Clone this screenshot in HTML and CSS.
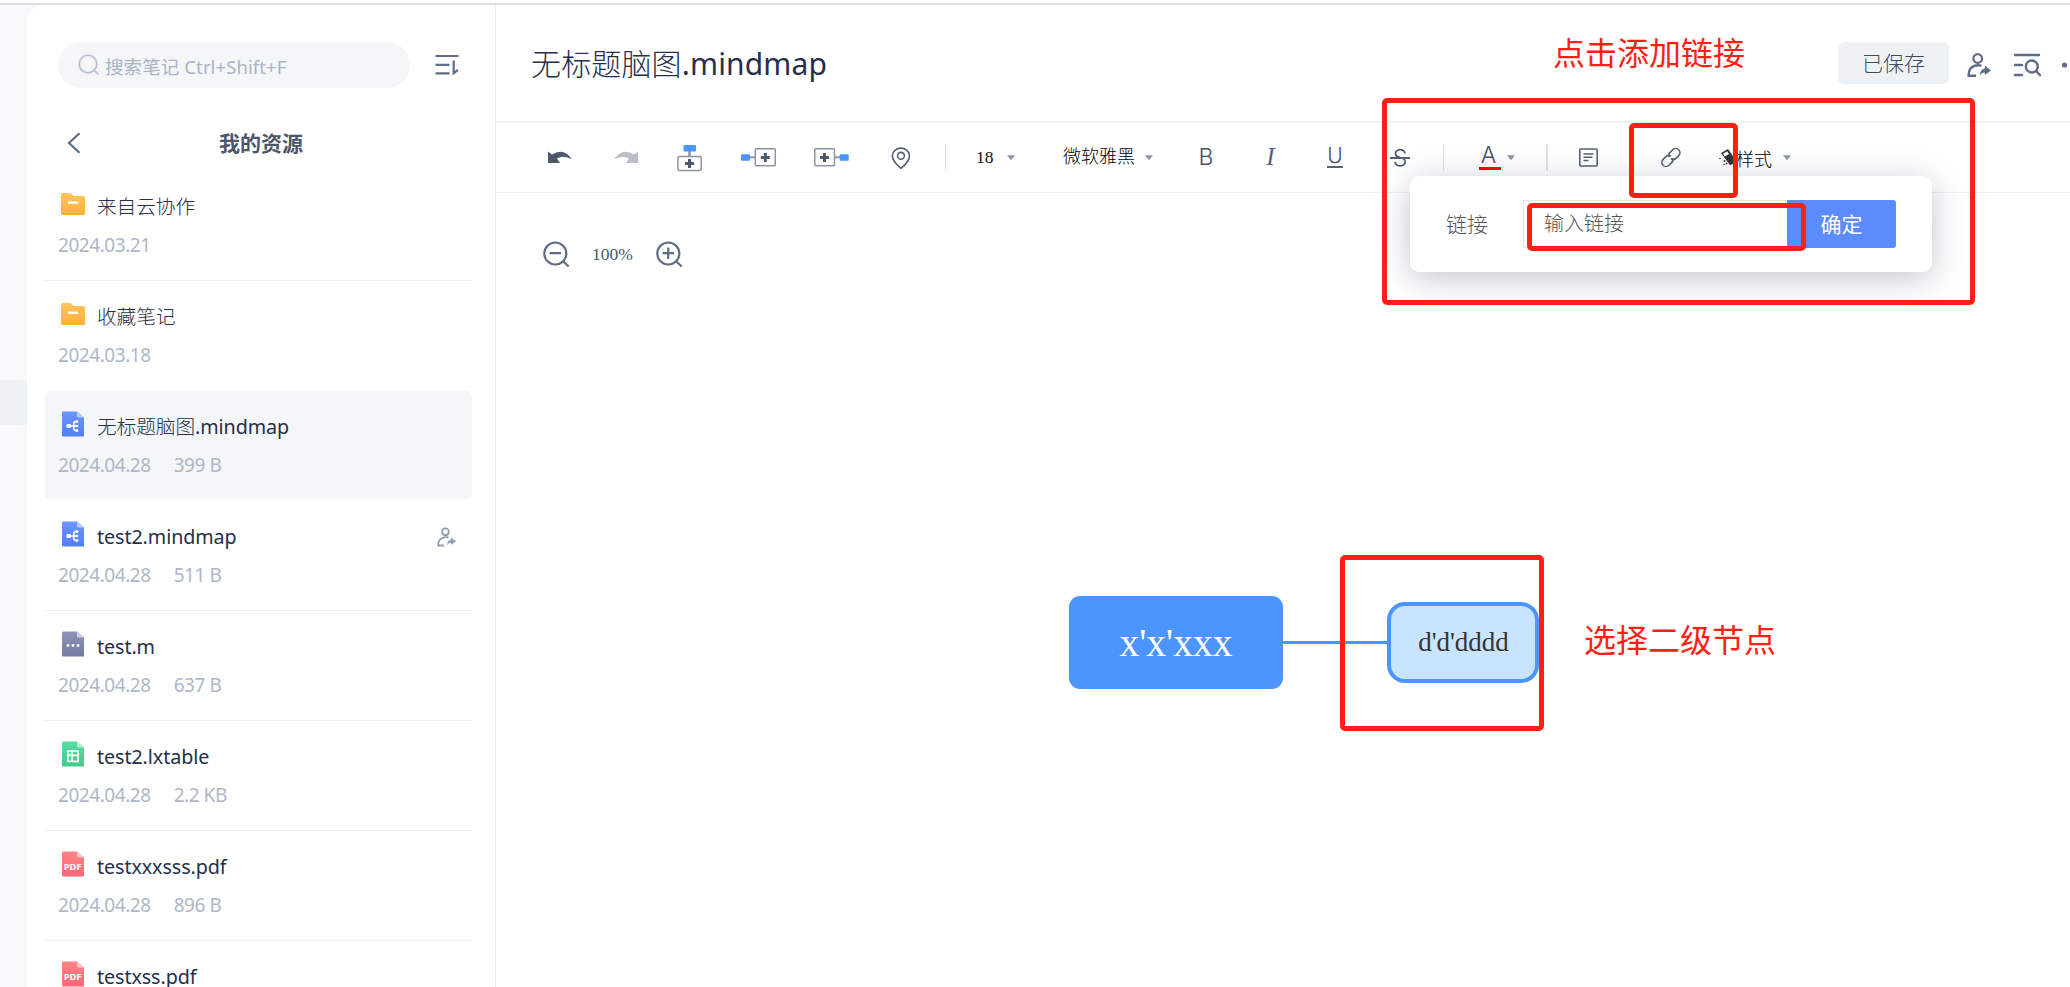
FILE: index.html
```html
<!DOCTYPE html>
<html lang="zh-CN">
<head>
<meta charset="utf-8">
<title>无标题脑图.mindmap</title>
<link rel="stylesheet" href="styles.css">
</head>
<body>
<svg class="defs" width="0" height="0">
  <defs>
    <linearGradient id="gFolder" x1="0" y1="0" x2="0" y2="1"><stop offset="0" stop-color="#ffc45c"/><stop offset="1" stop-color="#ffb03c"/></linearGradient>
    <linearGradient id="gBlue" x1="0" y1="0" x2="0" y2="1"><stop offset="0" stop-color="#6c96ff"/><stop offset="1" stop-color="#4f7ffc"/></linearGradient>
    <linearGradient id="gGrey" x1="0" y1="0" x2="0" y2="1"><stop offset="0" stop-color="#8f94b8"/><stop offset="1" stop-color="#747aa4"/></linearGradient>
    <linearGradient id="gGreen" x1="0" y1="0" x2="0" y2="1"><stop offset="0" stop-color="#5ad9a0"/><stop offset="1" stop-color="#41cb8c"/></linearGradient>
    <linearGradient id="gRed" x1="0" y1="0" x2="0" y2="1"><stop offset="0" stop-color="#ff8289"/><stop offset="1" stop-color="#fe6874"/></linearGradient>
  </defs>
  <symbol id="folder" viewBox="0 0 24 26"><path d="M0 3.500Q0 2 1.500 2H9.500L12.500 5H22.500Q24 5 24 6.500V22.500Q24 24 22.500 24H1.500Q0 24 0 22.500Z" fill="url(#gFolder)"/><path d="M7 11.700h10" stroke="#fff" stroke-width="2.300"/></symbol>
  <symbol id="mind" viewBox="0 0 24 26"><path d="M1 1.500Q1 .5 2 .5H16L23 6.500V25Q23 25.500 22 25.500H2Q1 25.500 1 24.500Z" fill="url(#gBlue)"/><path d="M16 .5L23 6.500H17.500Q16 6.500 16 5Z" fill="#b9ccff"/><path d="M9 15h8M17 10.500h-2.200q-2 0-2 2v5q0 2 2 2H17" fill="none" stroke="#fff" stroke-width="1.600"/><g fill="#fff"><rect x="5.500" y="13" width="4.500" height="4" rx="1"/><rect x="14.500" y="9.300" width="2.800" height="2.600" rx="1"/><rect x="14.500" y="13.700" width="2.800" height="2.600" rx="1"/><rect x="14.500" y="18.200" width="2.800" height="2.600" rx="1"/></g></symbol>
  <symbol id="other" viewBox="0 0 24 26"><path d="M1 1.500Q1 .5 2 .5H16L23 6.500V25Q23 25.500 22 25.500H2Q1 25.500 1 24.500Z" fill="url(#gGrey)"/><path d="M16 .5L23 6.500H17.500Q16 6.500 16 5Z" fill="#ced0e0"/><g fill="#fff"><circle cx="7" cy="14.500" r="1.400"/><circle cx="12" cy="14.500" r="1.400"/><circle cx="17" cy="14.500" r="1.400"/></g></symbol>
  <symbol id="table" viewBox="0 0 24 26"><path d="M1 1.500Q1 .5 2 .5H16L23 6.500V25Q23 25.500 22 25.500H2Q1 25.500 1 24.500Z" fill="url(#gGreen)"/><path d="M16 .5L23 6.500H17.500Q16 6.500 16 5Z" fill="#b5edd3"/><path d="M6.800 10h10.400v10.300H6.800ZM6.800 14.300h10.400M11 10v10.300" fill="none" stroke="#fff" stroke-width="1.700" stroke-linejoin="round"/></symbol>
  <symbol id="pdf" viewBox="0 0 24 26"><path d="M1 1.500Q1 .5 2 .5H16L23 6.500V25Q23 25.500 22 25.500H2Q1 25.500 1 24.500Z" fill="url(#gRed)"/><path d="M16 .5L23 6.500H17.500Q16 6.500 16 5Z" fill="#ffc6ca"/></symbol>
  <symbol id="share" viewBox="0 0 24 24"><circle cx="10.700" cy="5.500" r="4.300" fill="none" stroke="currentColor" stroke-width="2.300"/><path d="M14.500 12.600Q7.500 11 3.500 15.500Q1.300 18.500 1.600 22.700H9" fill="none" stroke="currentColor" stroke-width="2.400"/><path d="M17.800 12.500L24 17.500L17.800 22V19.400Q14.500 19.300 13 22.500Q13 16 17.800 15.500Z" fill="currentColor"/></symbol>
  <symbol id="caret" viewBox="0 0 8 5"><path d="M0 .3H8L4.800 4.500Q4 5.200 3.200 4.500Z" fill="#8d98aa"/></symbol>
</svg>
<div class="topline"></div>
<div class="app">
  <nav class="rail"><div class="rail-active"></div></nav>
  <aside class="panel">
    <div class="search-row">
      <div class="search">
        <svg width="22" height="22" viewBox="0 0 22 22" fill="none" stroke="#b7c1d1" stroke-width="1.800"><circle cx="10" cy="10" r="8.800"/><path d="M16 16.300l4.500 4"/></svg>
        <span>搜索笔记 Ctrl+Shift+F</span>
      </div>
      <svg class="sort" width="24" height="22" viewBox="0 0 24 22" fill="none" stroke="#5f6c86" stroke-width="2.200"><path d="M0.500 2H23.500M.5 10.800H14.500M.5 19.300H14.500M18.700 6.500V19.300L23 15.800"/></svg>
    </div>
    <div class="crumb">
      <svg width="14" height="22" viewBox="0 0 14 22" fill="none" stroke="#5f6c86" stroke-width="2.200"><path d="M12.500 1.200L2 11l10.500 9.800"/></svg>
      <h2>我的资源</h2>
    </div>
    <ul class="files">
      <li class="file"><div class="name cjk"><svg width="24" height="26"><use href="#folder"/></svg><span>来自云协作</span></div><div class="meta"><span>2024.03.21</span></div></li>
      <li class="file before-active"><div class="name cjk"><svg width="24" height="26"><use href="#folder"/></svg><span>收藏笔记</span></div><div class="meta"><span>2024.03.18</span></div></li>
      <li class="file active"><div class="name"><svg width="24" height="26"><use href="#mind"/></svg><span><b>无标题脑图</b>.mindmap</span></div><div class="meta"><span>2024.04.28</span><span>399 B</span></div></li>
      <li class="file"><div class="name"><svg width="24" height="26"><use href="#mind"/></svg><span>test2.mindmap</span><svg class="shared" width="19" height="20"><use href="#share"/></svg></div><div class="meta"><span>2024.04.28</span><span>511 B</span></div></li>
      <li class="file"><div class="name"><svg width="24" height="26"><use href="#other"/></svg><span>test.m</span></div><div class="meta"><span>2024.04.28</span><span>637 B</span></div></li>
      <li class="file"><div class="name"><svg width="24" height="26"><use href="#table"/></svg><span>test2.lxtable</span></div><div class="meta"><span>2024.04.28</span><span>2.2 KB</span></div></li>
      <li class="file"><div class="name"><svg width="24" height="26"><use href="#pdf"/><text class="pdf-label" x="2.700" y="18.700" textLength="18" lengthAdjust="spacingAndGlyphs">PDF</text></svg><span>testxxxsss.pdf</span></div><div class="meta"><span>2024.04.28</span><span>896 B</span></div></li>
      <li class="file"><div class="name"><svg width="24" height="26"><use href="#pdf"/><text class="pdf-label" x="2.700" y="18.700" textLength="18" lengthAdjust="spacingAndGlyphs">PDF</text></svg><span>testxss.pdf</span></div></li>
    </ul>
  </aside>
  <main class="main">
    <header class="header">
      <h1><b>无标题脑图</b>.mindmap</h1>
      <div class="saved">已保存</div>
      <svg class="h-share" width="24" height="24"><use href="#share"/></svg>
      <svg class="h-find" width="28" height="24" viewBox="0 0 28 24" fill="none" stroke="#5f6c86" stroke-width="2.400" stroke-linecap="round"><path d="M2 2H26M2 12H9M2 22H9"/><circle cx="18.800" cy="13.500" r="6"/><path d="M23.300 18l3.700 4.300"/></svg>
      <svg class="h-more" width="8" height="24" viewBox="0 0 8 24"><circle cx="3.500" cy="12" r="2.600" fill="#5f6c86"/></svg>
    </header>
    <div class="toolbar">
      <svg class="t-undo" width="24" height="40" viewBox="548 137 24 40"><path d="M548 151.500L552 154.500Q564 147 572 159.500Q564 154.500 557 158.500L560 163H548Z" fill="#4d596b"/></svg>
      <svg class="t-redo" width="24" height="40" viewBox="614 137 24 40"><path d="M638 151.500L634 154.500Q622 147 614 159.500Q622 154.500 629 158.500L626 163H638Z" fill="#b9bec6"/></svg>
      <svg class="t-parent" width="25" height="40" viewBox="677 137 25 40"><path d="M689.500 151v6" stroke="#8b95a6" stroke-width="2.500"/><rect x="683.500" y="145" width="12.500" height="6.500" rx="1" fill="#4c95ff"/><rect x="677.900" y="156.500" width="23.300" height="14" rx="1.500" fill="#fff" stroke="#8b95a6" stroke-width="1.500"/><path d="M689.500 159v9M685 163.500h9" stroke="#4d596b" stroke-width="3"/></svg>
      <svg class="t-left" width="35" height="40" viewBox="741 137 35 40"><path d="M749 157.300h6" stroke="#8b95a6" stroke-width="2"/><rect x="741" y="154.200" width="9" height="6.500" rx="1" fill="#4c95ff"/><rect x="755.300" y="148.800" width="20" height="17" rx="1" fill="#fff" stroke="#8b95a6" stroke-width="1.500"/><path d="M765.300 153v9M760.800 157.500h9" stroke="#4d596b" stroke-width="3"/></svg>
      <svg class="t-right" width="35" height="40" viewBox="814 137 35 40"><path d="M834 157.300h6" stroke="#8b95a6" stroke-width="2"/><rect x="839.700" y="154.200" width="9" height="6.500" rx="1" fill="#4c95ff"/><rect x="814.800" y="148.800" width="19.700" height="17" rx="1" fill="#fff" stroke="#8b95a6" stroke-width="1.500"/><path d="M824.500 153v9M820 157.500h9" stroke="#4d596b" stroke-width="3"/></svg>
      <svg class="t-pin" width="19" height="40" viewBox="891 137 19 40" fill="none" stroke="#556176" stroke-width="1.600"><path d="M901 168.300Q892.300 161.500 892.300 155.500A8.700 8.700 0 0 1 909.500 155.500Q909.500 161.500 901 168.300Z"/><circle cx="901" cy="155.800" r="3.400"/></svg>
      <i class="sep s1"></i>
      <span class="size">18</span>
      <svg class="caret c1" width="8" height="5"><use href="#caret"/></svg>
      <span class="font">微软雅黑</span>
      <svg class="caret c2" width="8" height="5"><use href="#caret"/></svg>
      <span class="glyph g-b">B</span>
      <span class="glyph g-i">I</span>
      <span class="glyph g-u">U</span>
      <span class="glyph g-s">S</span>
      <i class="sep s2"></i>
      <span class="glyph g-a">A</span>
      <svg class="caret c3" width="8" height="5"><use href="#caret"/></svg>
      <i class="sep s3"></i>
      <svg class="t-note" width="19" height="40" viewBox="1579 137 19 40" fill="none" stroke="#556176" stroke-width="1.600"><rect x="1579.800" y="149" width="17.400" height="17" rx="1"/><path d="M1583.500 154h10M1583.500 157.200h9M1583.500 160.500h5"/></svg>
      <svg class="t-link" width="20" height="40" viewBox="1661 137 20 40" fill="none" stroke="#556176" stroke-width="1.600"><g transform="translate(1670.900 157.500) rotate(-45)"><path d="M-.8 -1.500A4.200 4.200 0 0 1 3.300 -4.200H6.800A4.200 4.200 0 0 1 6.800 4.200H3.300A4.200 4.200 0 0 1 -.9 0.800"/><path d="M.8 1.500A4.200 4.200 0 0 1 -3.300 4.200H-6.800A4.200 4.200 0 0 1 -6.800 -4.200H-3.300A4.200 4.200 0 0 1 .9 -0.800"/></g></svg>
      <svg class="t-brush" width="16" height="40" viewBox="1719 137 16 40"><path d="M1721 153L1728 149L1735 159V163L1730 165.300Z" fill="#333"/><path d="M1723 153.800L1727.200 151.200L1729 154L1724.800 156.600Z" fill="#fff"/><g fill="#333"><circle cx="1720" cy="158.500" r=".8"/><circle cx="1724.500" cy="161" r="1"/><circle cx="1726.500" cy="163.500" r="1"/><circle cx="1724" cy="164.500" r=".8"/></g></svg>
      <span class="style">样式</span>
      <svg class="caret c4" width="8" height="5"><use href="#caret"/></svg>
      <div class="link-pop">
        <label>链接</label>
        <div class="link-input">输入链接</div>
        <div class="link-ok">确定</div>
      </div>
    </div>
    <section class="canvas">
      <div class="zoom">
        <svg width="27" height="27" viewBox="0 0 27 27" fill="none" stroke="#5f6c86" stroke-width="2.200"><circle cx="12.300" cy="12.500" r="11"/><path d="M6.500 12.200h11.500M20.300 20.500l5.400 5"/></svg>
        <span>100%</span>
        <svg width="27" height="27" viewBox="0 0 27 27" fill="none" stroke="#5f6c86" stroke-width="2.200"><circle cx="12.300" cy="12.500" r="11"/><path d="M6.500 12.200h11.500M12.200 6.500v11.500M20.300 20.500l5.400 5"/></svg>
      </div>
      <div class="edge"></div>
      <div class="node root">x'x'xxx</div>
      <div class="node child">d'd'dddd</div>
    </section>
  </main>
</div>
<div class="mark m-pop"></div>
<div class="mark m-link"></div>
<div class="mark m-input"></div>
<div class="mark m-node"></div>
<div class="note n-top">点击添加链接</div>
<div class="note n-node">选择二级节点</div>
</body>
</html>
```

FILE: styles.css
```css
* { box-sizing: border-box; }
body {
  margin: 0; width: 2070px; height: 987px; overflow: hidden; background: #fff;
  position: relative;
  font-family: "Noto Sans", "Noto Sans CJK SC", sans-serif; color: #262f4b;
}
.defs { position: absolute; }
svg { display: block; flex: none; }
h1, h2, ul { margin: 0; padding: 0; font-weight: 400; }
b { font-weight: 300; }
.topline { height: 5px; border-top: 3px solid #fff; background: #dfdfdf; }
.app { display: flex; height: 982px; background: #f8f9fb; }
.rail { width: 27px; flex: none; padding-top: 375px; background: linear-gradient(90deg, #f9fafc 75%, #f5f7f9); }
.rail-active { height: 45px; background: #eef2f5; }

.panel { width: 469px; flex: none; background: #fff; border-right: 1px solid #ececee; border-top-left-radius: 18px; overflow: hidden; }
.search-row { display: flex; padding: 37px 0 0 31px; }
.search { width: 352px; height: 46px; border-radius: 23px; background: #f4f6f8; display: flex; padding-left: 20px; }
.search svg { margin-top: 12px; }
.search span { margin-left: 5px; line-height: 50px; font-size: 18.5px; letter-spacing: 0.1px; color: #a9b4c6; white-space: nowrap; }
.sort { margin: 12px 0 0 25px; }
.crumb { display: flex; height: 83px; padding: 44px 0 0 40px; }
.crumb h2 { margin: -5px 0 0 138px; font-size: 21px; line-height: 32px; font-weight: 700; color: #4d566b; }
.files { list-style: none; padding-left: 18px; }
.file { width: 427px; height: 110px; padding: 20px 13px 0 16px; border-bottom: 1px solid #eef1f3; }
.file.before-active { border-color: transparent; }
.file.active { height: 109px; margin-bottom: 1px; background: #f4f6f8; border: 0; border-radius: 6px; }
.name { display: flex; height: 32px; }
.name span { margin-left: 12px; line-height: 32px; font-size: 19.7px; letter-spacing: -0.08px; white-space: nowrap; }
.cjk { font-weight: 300; }
.shared { margin: 6px 3px 0 auto; color: #939daf; }
.meta { display: flex; gap: 23px; margin-top: 7px; margin-left: -3px; font-size: 19px; line-height: 30px; letter-spacing: -0.45px; color: #adb7c8; }
.pdf-label { font: 700 8.500px "Open Sans", sans-serif; fill: #fff; }

.main { width: 1574px; flex: none; background: #fff; position: relative; }
.header { height: 118px; padding-left: 35px; border-bottom: 2px solid #f1f1f2; display: flex; }
.header h1 { margin-top: 35px; width: 1307px; font-size: 30px; line-height: 48px; letter-spacing: 0.15px; }
.saved { width: 111px; height: 42px; margin-top: 37px; border-radius: 6px; background: #eff2f5; color: #414a60; font-size: 21px; font-weight: 300; line-height: 43px; text-align: center; }
.h-share { margin: 48px 0 0 18px; color: #5f6c86; }
.h-find { margin: 48px 0 0 22px; }
.h-more { margin: 48px 0 0 20px; }

.toolbar { position: relative; display: flex; height: 70px; padding-top: 14px; border-bottom: 1px solid #f0f0f2; }
.t-undo { margin-left: 52px; }
.t-redo { margin-left: 42px; }
.t-parent, .t-left { margin-left: 39px; }
.t-right { margin-left: 38px; }
.t-pin { margin-left: 42px; }
.sep { width: 1px; height: 27px; margin-top: 7px; background: #dfe1e4; }
.s1 { margin-left: 35px; }
.s2 { margin-left: 33px; }
.s3 { width: 2px; margin-left: 31px; }
.size { width: 18px; margin-left: 30px; font: 17.500px/40px "Liberation Serif", serif; color: #111; }
.caret { margin-top: 18px; }
.c1 { margin-left: 13px; }
.c2 { margin-left: 9px; }
.c3 { margin-left: 6px; }
.c4 { margin-left: 11px; }
.font { width: 73px; margin-left: 48px; font-size: 18px; font-weight: 300; line-height: 38px; color: #000; white-space: nowrap; }
.glyph { height: 40px; font: 300 23px/40px Inter, sans-serif; color: #455168; text-align: center; position: relative; }
.g-b { width: 16px; margin-left: 45px; }
.g-i { width: 11px; margin-left: 51px; font: italic 25px/40px "Liberation Serif", serif; color: #556176; }
.g-u { width: 16px; margin-left: 51px; line-height: 37px; font-size: 21px; }
.g-u::after { content: ""; position: absolute; left: 0; right: 0; top: 29px; height: 2px; background: #556176; }
.g-s { width: 20px; margin-left: 47px; line-height: 42px; }
.g-s::after { content: ""; position: absolute; left: 0; right: 0; top: 20px; height: 2px; background: #556176; }
.g-a { width: 22px; margin-left: 35px; line-height: 37px; text-indent: -3px; }
.g-a::after { content: ""; position: absolute; left: 0; right: 0; top: 30px; height: 3px; background: #f90408; }
.t-note { margin-left: 31px; }
.t-link { margin-left: 63px; }
.t-brush { margin-left: 38px; }
.style { width: 36px; margin-left: 1px; font-size: 18px; font-weight: 300; line-height: 44px; color: #000; }

.link-pop { position: absolute; left: 914px; top: 53px; width: 522px; height: 96px; padding: 24px 36px; display: flex; background: #fff; border-radius: 9px; box-shadow: 0 6px 32px rgba(60, 80, 100, .32); z-index: 2; }
.link-pop label { width: 77px; font-size: 21px; font-weight: 300; line-height: 49px; color: #555; }
.link-input { width: 264px; height: 48px; padding-left: 20px; border: 1px solid #e3e4e6; border-right: 0; font-size: 20px; font-weight: 300; line-height: 46px; color: #555; }
.link-ok { width: 109px; height: 48px; border-radius: 0 3px 3px 0; background: #5b8bff; color: #fff; font-size: 21px; line-height: 49px; text-align: center; }

.canvas { height: 794px; }
.zoom { display: flex; padding: 48px 0 0 47px; }
.zoom span { width: 86px; padding-right: 1px; text-align: center; font: 17.500px/27px "Liberation Serif", serif; color: #4d566b; }
.node { position: absolute; display: flex; align-items: center; justify-content: center; font-family: "Liberation Serif", serif; }
.root { left: 573px; top: 591px; width: 214px; height: 93px; border-radius: 11px; background: #4c95ff; color: #fff; font-size: 39.500px; }
.child { left: 891px; top: 597px; width: 152px; height: 81px; border: 4px solid #4c95ff; border-radius: 18px; background: #c9e4ff; color: #333; font-size: 27px; padding-left: 1px; }
.edge { position: absolute; left: 787px; top: 636px; width: 105px; height: 3px; background: #4c95ff; }

.mark { position: absolute; border: 5px solid #ff2013; border-radius: 5px; z-index: 3; }
.m-pop { left: 1382px; top: 98px; width: 593px; height: 207px; }
.m-link { left: 1629px; top: 123px; width: 109px; height: 75px; }
.m-input { left: 1527px; top: 203px; width: 279px; height: 48px; }
.m-node { left: 1340px; top: 555px; width: 204px; height: 176px; }
.note { position: absolute; z-index: 3; color: #ff2013; font-size: 32px; line-height: 48px; white-space: nowrap; }
.n-top { left: 1553px; top: 29px; }
.n-node { left: 1584px; top: 616px; }
```
